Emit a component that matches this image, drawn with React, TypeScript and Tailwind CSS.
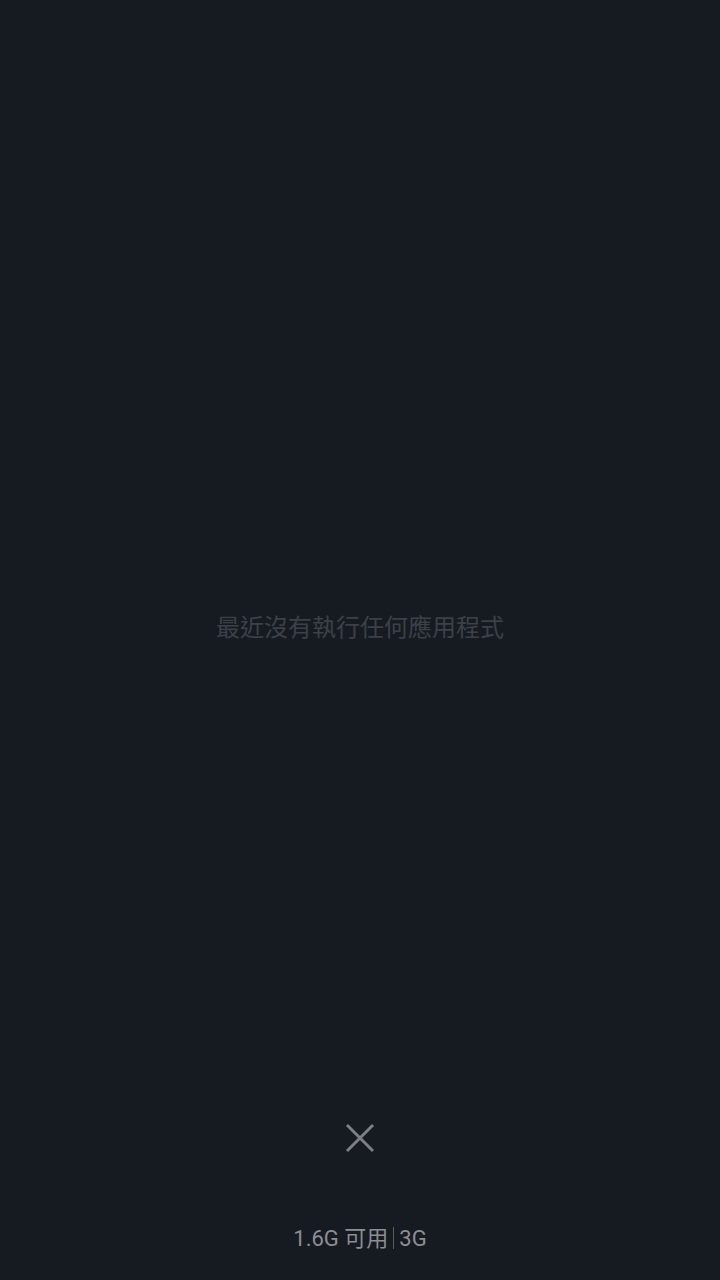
import React from 'react';

const font = 'Roboto, "Noto Sans CJK TC", sans-serif';

function CloseIcon() {
  return (
    <svg width="30" height="30" viewBox="0 0 30 30" fill="none">
      <path d="M2 2 L28 28 M28 2 L2 28" stroke="#7c7f83" strokeWidth="3" strokeLinecap="butt" />
    </svg>
  );
}

export default function App() {
  return (
    <div className="w-[720px] h-[1280px] bg-[#161b22] flex flex-col items-center overflow-hidden" style={{ fontFamily: font }}>
      <div className="mt-[612px] h-[32px] leading-[32px] text-[24px] text-[#3c4147]">
        最近沒有執行任何應用程式
      </div>
      <div className="mt-[479px] w-[30px] h-[30px] flex items-center justify-center">
        <CloseIcon />
      </div>
      <div className="mt-[71px] h-[28px] flex items-center text-[22px] text-[#8b8e92]">
        <span>1.6G 可用</span>
        <span className="mx-[5px] w-px h-[22px] bg-[#5a5e63]" />
        <span>3G</span>
      </div>
    </div>
  );
}
